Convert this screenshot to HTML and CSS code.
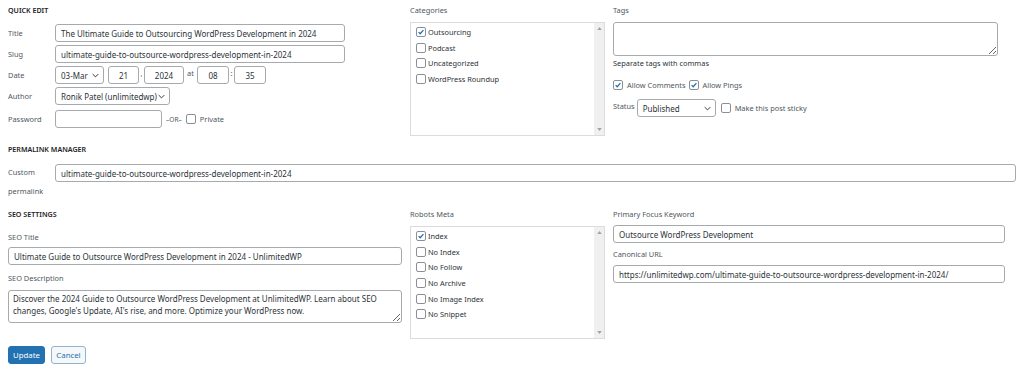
FILE: index.html
```
<!DOCTYPE html>
<html>
<head>
	<title>Quick Edit</title>
	<meta name="viewport" content="width=device-width, initial-scale=1">
	<link rel="stylesheet" href="styles.css">
</head>
<body>
<div class="quick-edit">

	<!-- Top: quick edit / categories / tags -->
	<div class="cols">
		<div class="col-left">
			<div class="section-title">QUICK EDIT</div>
			<div class="row first">
				<span class="label">Title</span>
				<input class="text title-input" type="text" value="The Ultimate Guide to Outsourcing WordPress Development in 2024">
			</div>
			<div class="row">
				<span class="label">Slug</span>
				<input class="text title-input" type="text" value="ultimate-guide-to-outsource-wordpress-development-in-2024">
			</div>
			<div class="row">
				<span class="label">Date</span>
				<div class="select month-select">03-Mar <svg class="chev" viewBox="0 0 10 6"><path d="M1 1l4 4 4-4" /></svg></div>
				<input class="text small day" type="text" value="21">
				<span class="sep">,</span>
				<input class="text small year" type="text" value="2024">
				<span class="sep at">at</span>
				<input class="text small hour" type="text" value="08">
				<span class="sep">:</span>
				<input class="text small minute" type="text" value="35">
			</div>
			<div class="row">
				<span class="label">Author</span>
				<div class="select author-select">Ronik Patel (unlimitedwp) <svg class="chev" viewBox="0 0 10 6"><path d="M1 1l4 4 4-4" /></svg></div>
			</div>
			<div class="row last">
				<span class="label">Password</span>
				<input class="text password" type="text" value="">
				<span class="or">&ndash;OR&ndash;</span>
				<span class="check"></span>
				<span class="check-label">Private</span>
			</div>
		</div>

		<div class="col-center">
			<div class="col-title">Categories</div>
			<div class="list-box cat-box">
				<ul>
					<li><span class="check checked"><svg viewBox="0 0 10 10"><path d="M2 5.2l2 2 4-4.6" /></svg></span>Outsourcing</li>
					<li><span class="check"></span>Podcast</li>
					<li><span class="check"></span>Uncategorized</li>
					<li><span class="check"></span>WordPress Roundup</li>
				</ul>
				<div class="scrollbar">
					<svg class="arrow" viewBox="0 0 6 4"><path d="M0 4L3 0L6 4Z" /></svg>
					<svg class="arrow" viewBox="0 0 6 4"><path d="M0 0L3 4L6 0Z" /></svg>
				</div>
			</div>
		</div>

		<div class="col-right">
			<div class="col-title">Tags</div>
			<textarea class="tags-area"></textarea>
			<p class="howto">Separate tags with commas</p>
			<div class="row checks">
				<span class="check checked"><svg viewBox="0 0 10 10"><path d="M2 5.2l2 2 4-4.6" /></svg></span>
				<span class="check-label">Allow Comments</span>
				<span class="check checked"><svg viewBox="0 0 10 10"><path d="M2 5.2l2 2 4-4.6" /></svg></span>
				<span class="check-label">Allow Pings</span>
			</div>
			<div class="row status-row">
				<span class="status-label">Status</span>
				<div class="select status-select">Published <svg class="chev" viewBox="0 0 10 6"><path d="M1 1l4 4 4-4" /></svg></div>
				<span class="check"></span>
				<span class="check-label">Make this post sticky</span>
			</div>
		</div>
	</div>

	<!-- Permalink manager -->
	<div class="permalink">
		<div class="section-title">PERMALINK MANAGER</div>
		<div class="row permalink-row">
			<span class="label wrap">Custom permalink</span>
			<input class="text permalink-input" type="text" value="ultimate-guide-to-outsource-wordpress-development-in-2024">
		</div>
	</div>

	<!-- SEO settings -->
	<div class="cols seo">
		<div class="col-left">
			<div class="section-title">SEO SETTINGS</div>
			<div class="field-label">SEO Title</div>
			<input class="text full" type="text" value="Ultimate Guide to Outsource WordPress Development in 2024 - UnlimitedWP">
			<div class="field-label desc-label">SEO Description</div>
			<textarea class="desc-area">Discover the 2024 Guide to Outsource WordPress Development at UnlimitedWP. Learn about SEO changes, Google's Update, AI's rise, and more. Optimize your WordPress now.</textarea>
		</div>

		<div class="col-center">
			<div class="col-title">Robots Meta</div>
			<div class="list-box robots-box">
				<ul>
					<li><span class="check checked"><svg viewBox="0 0 10 10"><path d="M2 5.2l2 2 4-4.6" /></svg></span>Index</li>
					<li><span class="check"></span>No Index</li>
					<li><span class="check"></span>No Follow</li>
					<li><span class="check"></span>No Archive</li>
					<li><span class="check"></span>No Image Index</li>
					<li><span class="check"></span>No Snippet</li>
				</ul>
				<div class="scrollbar">
					<svg class="arrow" viewBox="0 0 6 4"><path d="M0 4L3 0L6 4Z" /></svg>
					<svg class="arrow" viewBox="0 0 6 4"><path d="M0 0L3 4L6 0Z" /></svg>
				</div>
			</div>
		</div>

		<div class="col-right">
			<div class="col-title">Primary Focus Keyword</div>
			<input class="text keyword" type="text" value="Outsource WordPress Development">
			<div class="field-label canon">Canonical URL</div>
			<input class="text keyword" type="text" value="https://unlimitedwp.com/ultimate-guide-to-outsource-wordpress-development-in-2024/">
		</div>
	</div>

	<div class="actions">
		<button class="btn primary">Update</button>
		<button class="btn secondary">Cancel</button>
	</div>
</div>
</body>
</html>
```

FILE: styles.css
```
/* Base */
body {
  margin: 0;
  background: #fff;
  font-family: "Noto Sans", "Open Sans", sans-serif;
  font-size: 7.4px;
  color: #2c3338;
}

.quick-edit {
  padding: 4px 8px 0 8px;
}

/* Three column layout */
.cols {
  display: grid;
  grid-template-columns: 394px 195px 403px;
  column-gap: 8px;
  align-items: start;
}

.section-title {
  font-size: 7.1px;
  font-weight: 600;
  color: #1d2327;
  height: 13px;
  line-height: 13px;
}

.col-title,
.field-label {
  color: #50575e;
  height: 13px;
  line-height: 13px;
}

/* Rows with label on the left */
.row {
  display: flex;
  align-items: center;
  margin-top: 3px;
  white-space: nowrap;
}
.row.first { margin-top: 7px; }
.row.last { margin-top: 5px; }

.label {
  width: 47px;
  flex: none;
  color: #50575e;
}

/* Inputs */
.text {
  box-sizing: border-box;
  height: 18px;
  border: 1px solid #a7aaad;
  border-radius: 3px;
  padding: 0 5px;
  font-family: inherit;
  font-size: 8px;
  color: #2c3338;
  background: #fff;
  margin: 0;
  display: block;
}
.title-input { width: 290px; }
.small { text-align: center; padding: 0; }
.day { width: 31px; margin-left: 4px; }
.year { width: 40px; }
.hour { width: 32px; }
.minute { width: 32px; }
.sep { width: 5px; text-align: center; color: #50575e; align-self: flex-start; line-height: 14px; }
.sep.at { width: 13px; }
.password { width: 107px; }
.or { margin: 0 4px; font-size: 6.6px; color: #50575e; }

.select {
  box-sizing: border-box;
  height: 18px;
  border: 1px solid #a7aaad;
  border-radius: 3px;
  padding: 0 4px 0 5px;
  display: flex;
  align-items: center;
  justify-content: space-between;
  background: #fff;
  color: #2c3338;
  font-size: 8px;
  white-space: nowrap;
}
.month-select { width: 49px; }
.author-select { width: 115px; }
.status-select { width: 79px; }

.chev {
  width: 7px;
  height: 5px;
  fill: none;
  stroke: #2c3338;
  stroke-width: 1.4;
}

/* Checkboxes */
.check {
  box-sizing: border-box;
  width: 10px;
  height: 10px;
  border: 1px solid #8c8f94;
  border-radius: 2px;
  background: #fff;
  display: inline-flex;
  flex: none;
}
.check svg {
  width: 8px;
  height: 8px;
  fill: none;
  stroke: #2271b1;
  stroke-width: 1.6;
}
.check-label {
  margin-left: 4px;
  color: #50575e;
}

/* Scrollable lists */
.list-box {
  box-sizing: border-box;
  border: 1px solid #dcdcde;
  display: flex;
  margin-top: 5px;
}
.cat-box { height: 114px; }
.robots-box { height: 113px; }
.list-box ul {
  list-style: none;
  margin: 0;
  padding: 1px 0 0 5px;
  flex: 1;
}
.list-box li {
  display: flex;
  align-items: center;
  height: 15.7px;
  color: #2c3338;
}
.list-box li .check {
  margin-right: 2px;
}
.scrollbar {
  width: 10px;
  background: #f0f0f0;
  display: flex;
  flex-direction: column;
  justify-content: space-between;
  align-items: center;
  padding: 4px 0;
}
.arrow {
  width: 5px;
  height: 3px;
  fill: #a3a3a3;
}

/* Right column */
.tags-area {
  box-sizing: border-box;
  display: block;
  width: 385px;
  height: 34px;
  margin: 5px 0 0 0;
  border: 1px solid #a7aaad;
  border-radius: 3px;
}
.howto {
  margin: 1px 0 0 0;
  line-height: 13px;
  color: #2c3338;
}
.checks {
  margin-top: 10px;
}
.checks .check-label {
  margin-right: 3px;
}
.status-row {
  margin-top: 9px;
}
.status-label {
  color: #50575e;
  margin-right: 2px;
  align-self: flex-start;
  line-height: 14px;
}
.status-row .check {
  margin-left: 5px;
}

/* Permalink manager */
.permalink {
  margin-top: 7px;
}
.permalink-row {
  margin-top: 8px;
  align-items: flex-start;
}
.label.wrap {
  white-space: normal;
  line-height: 19px;
  margin-top: -1px;
}
.permalink-input {
  width: 961px;
}

/* SEO */
.seo {
  margin-top: 7px;
}
.field-label {
  margin-top: 10px;
}
.field-label.desc-label {
  margin-top: 7px;
}
.full {
  width: 394px;
  margin-top: 3px;
}
.desc-area {
  box-sizing: border-box;
  display: block;
  width: 394px;
  height: 33px;
  margin: 5px 0 0 0;
  border: 1px solid #a7aaad;
  border-radius: 3px;
  padding: 2px 4px;
  font-family: inherit;
  font-size: 8px;
  line-height: 12px;
  color: #2c3338;
  resize: vertical;
}
.keyword {
  width: 392px;
  margin-top: 4px;
}
.field-label.canon {
  margin-top: 5px;
}

/* Buttons */
.actions {
  display: flex;
  gap: 6px;
  margin-top: 7px;
}
.btn {
  box-sizing: border-box;
  height: 18px;
  padding: 0 3px;
  border-radius: 3px;
  font-family: inherit;
  font-size: 7.8px;
}
.btn.primary {
  background: #2271b1;
  border: 1px solid #2271b1;
  color: #fff;
  width: 37px;
}
.btn.secondary {
  background: #f6f7f7;
  border: 1px solid #8fb3d6;
  color: #2271b1;
  width: 35px;
}
```
